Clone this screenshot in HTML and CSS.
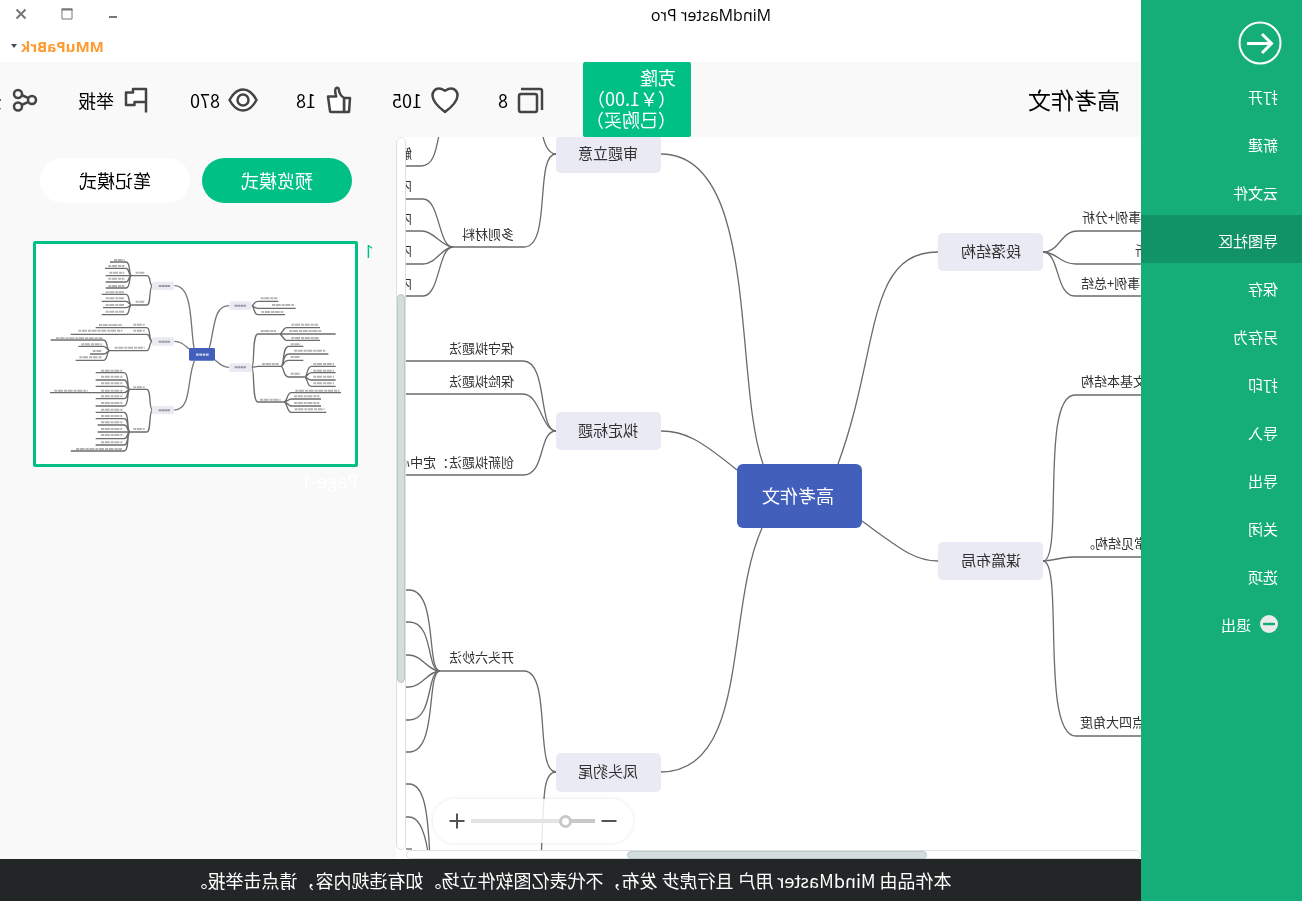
FILE: index.html
```html
<!DOCTYPE html>
<html lang="zh-CN">
<head>
<meta charset="utf-8">
<title>MindMaster Pro</title>
<link rel="stylesheet" href="styles.css">
</head>
<body>
<div class="app">
  <aside class="sidebar">
    <div class="sidebar-top">
      <button class="back" type="button" aria-label="返回">
        <svg width="44" height="44" viewBox="0 0 44 44" fill="none" stroke="#fff"><circle cx="22" cy="22" r="20.5" stroke-width="2"/><path d="M35 22.5H11" stroke-width="3"/><path d="M20 13l-9.500 9.500 9.500 9.500" stroke-width="3"/></svg>
      </button>
    </div>
    <nav class="menu">
      <a href="#">打开</a>
      <a href="#">新建</a>
      <a href="#">云文件</a>
      <a href="#" class="active">导图社区</a>
      <a href="#">保存</a>
      <a href="#">另存为</a>
      <a href="#">打印</a>
      <a href="#">导入</a>
      <a href="#">导出</a>
      <a href="#">关闭</a>
      <a href="#">选项</a>
      <a href="#"><svg width="18" height="18" viewBox="0 0 18 18"><circle cx="9" cy="9" r="9" fill="#ebebeb"/><path d="M4 9h10" stroke="#16ae78" stroke-width="2.400" stroke-linecap="round"/></svg>退出</a>
    </nav>
  </aside>

  <main class="main">
    <div class="titlebar">
      <div class="title-row">
        <h1>MindMaster Pro</h1>
        <div class="window-buttons">
          <button type="button" aria-label="最小化"><svg width="12" height="12" viewBox="0 0 12 12"><path d="M2 9h8" stroke="#777" stroke-width="2"/></svg></button>
          <button type="button" aria-label="最大化"><svg width="12" height="12" viewBox="0 0 12 12"><path d="M1 1h10v10H1z" fill="none" stroke="#777"/><path d="M.5 1.500h11" stroke="#777" stroke-width="2"/></svg></button>
          <button type="button" aria-label="关闭窗口"><svg width="12" height="12" viewBox="0 0 12 12"><path d="M1.500 1.500l9 9M10.500 1.500l-9 9" stroke="#777" stroke-width="2"/></svg></button>
        </div>
      </div>
      <div class="user-row">
        <button class="user" type="button">MMuPaBrk<svg width="6" height="4" viewBox="0 0 6 4"><path d="M0 0h6L3 4z" fill="#444a5c"/></svg></button>
      </div>
    </div>

    <header class="header">
      <h2>高考作文</h2>
      <button class="clone" type="button">克隆<br>（￥1.00）<br>（已购买）</button>
      <div class="stats">
        <button type="button"><svg width="30" height="30" viewBox="0 0 30 30"><rect x="9" y="9" width="18" height="18" rx="2"/><path d="M4 25V6q0-2 2-2h19"/></svg>8</button>
        <button type="button"><svg class="solid" width="30" height="30" viewBox="0 0 30 30"><path d="M15 27C11 24 3 17.500 2.500 11 2.300 6.500 5 3.500 9 3.500c2.500 0 4 1 6 2.200 2-1.200 3.500-2.200 6-2.200 4 0 6.700 3 6.500 7.500C27 17.500 19 24 15 27z"/></svg>105</button>
        <button type="button"><svg class="solid" width="30" height="30" viewBox="0 0 30 30"><path d="M4 13h6v14H5z"/><path d="M10 13c3-2 5-5 5.300-9 .2-2 3.200-1.500 3.500 1 .2 2.500-.3 4.500-1 6.500h8.200l-2 14.500q0 1-1.500 1H10z"/></svg>18</button>
        <button type="button"><svg class="solid" width="30" height="30" viewBox="0 0 30 30"><path d="M1.500 15C5 8.500 9.500 4.500 15 4.500s10 4 13.500 10.500C25 21.500 20.500 25.500 15 25.500S5 21.500 1.500 15z"/><circle cx="15" cy="15" r="5.500"/></svg>870</button>
        <button type="button"><svg class="solid" width="30" height="30" viewBox="0 0 30 30"><path stroke="none" d="M6 4h13v3.500h7V20h-8.500v-3H6z"/><path fill="none" d="M6 27.500V4h13v3.500h7V20h-8.500v-3H6"/></svg>举报</button>
        <button type="button"><svg width="30" height="30" viewBox="0 0 30 30"><circle cx="8" cy="15" r="4"/><circle cx="22" cy="9" r="4"/><circle cx="22" cy="21.500" r="4"/><path d="M11.500 13.200L18.500 10M11.500 16.800l7 3.200"/></svg>分享</button>
      </div>
    </header>

    <div class="content">
      <section class="canvas">
        <div class="stage">
          <svg class="map" width="100%" height="100%">
            <g transform="translate(-161 -137)">
              <g class="links">
                <path d="M539 464C569 380 542 154 641 154"/>
                <path d="M565 470C602 440 617 431 641 431"/>
                <path d="M540 528C577 610 552 772 641 772"/>
                <path d="M464 464C422 350 437 252 364 252"/>
                <path d="M440 521C403 548 388 561 364 561"/>
                <path d="M259 252C242 252 242 231 224 231H161"/>
                <path d="M259 252C245 252 242 264 226 264H161"/>
                <path d="M259 252C242 252 247 296 227 296H161"/>
                <path d="M259 561C238 561 262 395 227 395H161"/>
                <path d="M259 561C245 560 240 557 229 557H161"/>
                <path d="M259 561C238 561 262 736 226 736H161"/>
                <path d="M746 154C755 154 759 140 760 130"/>
                <path d="M746 154C768 154 750 247 778 247H849"/>
                <path d="M862 130C866 150 868 166 881 166H896"/>
                <path d="M849 247C864 247 862 199 879 199H896"/>
                <path d="M849 247C860 247 868 231 880 231H896"/>
                <path d="M849 247C860 247 866 264 879 264H896"/>
                <path d="M849 247C864 247 862 296 879 296H896"/>
                <path d="M746 431C764 431 754 361 779 361H896"/>
                <path d="M746 431C760 431 762 394 779 394H896"/>
                <path d="M746 431C764 431 756 475 779 475H896"/>
                <path d="M746 772C768 772 750 671 778 671H862"/>
                <path d="M746 772C760 772 758 800 761 860"/>
                <path d="M862 671C876 671 864 590 893 590h6"/>
                <path d="M862 671C876 671 868 622 893 622h6"/>
                <path d="M862 671C874 671 880 655 893 655h6"/>
                <path d="M862 671C874 671 880 687 893 687h6"/>
                <path d="M862 671C876 671 868 720 893 720h6"/>
                <path d="M862 671C876 671 864 752 893 752h6"/>
                <path d="M899 784h-6C878 784 874 810 872 860"/>
                <path d="M899 817h-6C882 817 876 835 873 860"/>
                <path d="M899 849h-9"/>
              </g>
              <g class="nodes">
                <rect x="641" y="135" width="105" height="38" rx="5"/>
                <rect x="641" y="412" width="105" height="38" rx="5"/>
                <rect x="641" y="753" width="105" height="39" rx="5"/>
                <rect x="259" y="233" width="105" height="38" rx="5"/>
                <rect x="259" y="542" width="105" height="38" rx="5"/>
                <text x="694" y="159">审题立意</text>
                <text x="694" y="436">拟定标题</text>
                <text x="694" y="777">凤头豹尾</text>
                <text x="311" y="257">段落结构</text>
                <text x="311" y="566">谋篇布局</text>
              </g>
              <g class="root">
                <rect x="440" y="464" width="125" height="64" rx="6"/>
                <text x="504" y="503">高考作文</text>
              </g>
              <g class="labels">
                <text x="788" y="239">多则材料</text>
                <text x="788" y="353">保守拟题法</text>
                <text x="788" y="386">保险拟题法</text>
                <text x="788" y="467">创新拟题法<tspan class="mid">：</tspan>定中心</text>
                <text x="788" y="662">开头六妙法</text>
                <text x="890" y="158">解</text>
                <text x="890" y="190">内</text>
                <text x="890" y="223">内</text>
                <text x="890" y="255">内</text>
                <text x="890" y="288">内</text>
              </g>
              <g class="labels end">
                <text x="220" y="222">事例+分析</text>
                <text x="167" y="255">析</text>
                <text x="221" y="288">事例+总结</text>
                <text x="221" y="386">文基本结构</text>
                <text x="220" y="548">常见结构<tspan class="mid">。</tspan></text>
                <text x="222" y="727">点四大角度</text>
              </g>
            </g>
          </svg>
          <div class="zoom">
            <button type="button" aria-label="缩小"><svg width="16" height="16" viewBox="0 0 16 16"><path d="M.5 8h15"/></svg></button>
            <input type="range" min="0" max="100" value="21" aria-label="缩放">
            <button type="button" aria-label="放大"><svg width="16" height="16" viewBox="0 0 16 16"><path d="M.5 8h15M8 .5v15"/></svg></button>
          </div>
        </div>
        <div class="hscroll"><div class="hthumb"></div></div>
      </section>
      <div class="vscroll"><div class="vthumb"></div></div>

      <aside class="panel">
        <div class="modes">
          <button class="mode selected" type="button">预览模式</button>
          <button class="mode" type="button">笔记模式</button>
        </div>
        <div class="page">
          <span class="page-number">1</span>
          <figure class="page-card">
            <svg class="thumb" viewBox="0 0 957 660">
              <g transform="translate(1005 -42) scale(-1 1)">
                <g class="thumb-main">
                  <path d="M522 354C510 290 520 167 463 167M507 357C490 342 480 334 463 334M523 392C500 450 515 540 463 540M568 354C585 290 580 227 628 227M585 390C600 403 610 412 628 412"/>
                </g>
                <g class="thumb-links">
                  <path d="M398 167C385 167 395 137 380 137H335M398 167C385 167 395 225 380 225H335M335 137C325 137 333 96 318 96H270M335 137C325 137 328 115 318 115H255M335 137H257M335 137C325 137 328 156 318 156H257M335 137C325 137 333 174 318 174H257"/>
                  <path d="M335 225C325 225 330 193 318 193H245M335 225C325 225 328 214 318 214H245M335 225C325 225 328 233 318 233H249M335 225C325 225 330 254 318 254H245"/>
                  <path d="M398 334C385 334 393 293 380 293H227M398 334C385 334 393 313 380 313H152M398 334C385 334 393 362 380 362H270M270 362C258 362 265 330 250 330H92M270 362C260 362 262 349 250 349H175M270 362C260 362 262 372 250 372H210M270 362C258 362 265 391 250 391H167"/>
                  <path d="M398 540C385 540 395 478 380 478H330M398 540C385 540 395 606 380 606H330M330 478C320 478 328 428 312 428H227M330 478C320 478 325 450 312 450H227M330 478C320 478 322 469 312 469H227M330 478C320 478 322 488 312 488H90M330 478C320 478 325 506 312 506H227M330 478C320 478 328 528 312 528H227"/>
                  <path d="M330 606C320 606 328 547 312 547H227M330 606C320 606 328 566 312 566H227M330 606C320 606 325 585 312 585H233M330 606H233M330 606C320 606 325 626 312 626H227M330 606C320 606 328 645 312 645H227M330 606C320 606 328 663 312 663H152"/>
                  <path d="M695 227C703 227 700 214 714 214H775M695 227C703 227 700 235 714 235H827M695 227C703 227 700 254 714 254H795"/>
                  <path d="M695 412C705 412 695 312 714 312H778M695 412L714 409H785M695 412C705 412 695 516 714 516H792"/>
                  <path d="M778 312C788 312 788 293 800 293H900M778 312H947M778 312C788 312 788 331 800 331H900"/>
                  <path d="M783 409C793 409 786 349 806 349H850M783 409C793 409 786 372 806 372H925M783 409C793 409 788 391 806 391H850M783 409C793 409 788 441 806 441H853"/>
                  <path d="M853 441C863 441 860 409 874 409H947M853 441C863 441 862 428 874 428H947M853 441C863 441 862 450 874 450H947M853 441C863 441 860 469 874 469H947"/>
                  <path d="M792 516C802 516 800 488 814 488H963M792 516C802 516 804 507 814 507H903M792 516C802 516 804 528 814 528H903M792 516C802 516 800 547 814 547H919"/>
                </g>
                <g class="thumb-text">
                  <path d="M282 90h32M265 108h48M268 128h45M265 146h48M265 168h48M257 187h55M257 205h55M257 225h55M257 245h55M347 128h28M347 215h28"/>
                  <path d="M237 285h70M340 284h34M175 302h132M340 302h34M284 353h90M108 325h140M184 343h62M218 363h28M178 382h68"/>
                  <path d="M243 422h64M243 440h64M243 460h64M103 482h100M243 482h64M243 499h64M243 519h64M340 472h34M243 539h64M243 558h64M243 577h64M243 597h64M243 615h64M243 637h64M168 657h138M340 597h34"/>
                  <path d="M722 205h50M756 225h66M724 246h66M814 284h80M808 303h98M814 324h82M722 303h46M812 343h30M822 362h94M812 381h30M726 402h50M812 431h30M720 509h62"/>
                  <path d="M880 402h62M880 422h62M880 440h62M880 460h62M826 482h132M822 499h76M822 519h76M824 538h90"/>
                </g>
                <g class="thumb-nodes">
                  <rect x="396" y="155" width="66" height="25" rx="5"/><rect x="396" y="322" width="66" height="25" rx="5"/><rect x="396" y="528" width="66" height="25" rx="5"/><rect x="628" y="214" width="66" height="26" rx="5"/><rect x="628" y="400" width="66" height="26" rx="5"/>
                  <path d="M416 168h34M416 335h34M416 541h34M644 227h34M644 412h34"/>
                </g>
                <rect x="507" y="354" width="78" height="38" rx="4" fill="#425fbb"/>
                <path d="M528 374h38" stroke="#c6cfec" stroke-width="7" stroke-dasharray="8 2"/>
              </g>
            </svg>
            <figcaption>Page-1</figcaption>
          </figure>
        </div>
      </aside>
    </div>

    <footer class="footer">本作品由 MindMaster 用户 且行虎步 发布，不代表亿图软件立场。如有违规内容，请点击举报。</footer>
  </main>
</div>
</body>
</html>
```

FILE: styles.css
```css
* { box-sizing: border-box; }

body {
  margin: 0;
  overflow: hidden;
  background: #fff;
  color: #000;
  font-family: "Open Sans", "Noto Sans CJK SC", sans-serif;
  font-size: 15px;
}

button {
  margin: 0;
  padding: 0;
  border: 0;
  background: none;
  color: inherit;
  font: inherit;
}

svg { flex: none; }

/* The whole window is shown flipped left to right. */
.app {
  display: flex;
  height: 100vh;
  transform: scaleX(-1);
}

/* Sidebar */
.sidebar {
  flex: 0 0 161px;
  background: #16ae78;
  color: #fff;
}
.sidebar-top {
  height: 71px;
  padding: 21px 20px 0;
}
.back svg { display: block; }
.menu { display: flex; flex-direction: column; }
.menu a {
  display: flex;
  align-items: center;
  gap: 9px;
  height: 48px;
  padding: 2px 24px 0;
  color: #fff;
  text-decoration: none;
  font-family: "Noto Sans CJK SC", sans-serif;
  font-size: 15px;
}
.menu .active { background: #129367; }

/* Main column */
.main {
  flex: 1;
  min-width: 0;
  display: flex;
  flex-direction: column;
}
.titlebar { height: 62px; }
.title-row { display: flex; height: 30px; align-items: center; }
.title-row h1 {
  flex: 1;
  margin: 0;
  text-align: center;
  font-size: 16px;
  font-weight: 400;
}
.window-buttons {
  width: 281px;
  display: flex;
  justify-content: flex-end;
  align-items: center;
  gap: 34px;
  padding: 0 15px 2px 0;
}
.window-buttons svg { display: block; }
.user-row {
  display: flex;
  justify-content: flex-end;
  align-items: center;
  height: 32px;
  padding-right: 11px;
}
.user {
  display: flex;
  align-items: center;
  gap: 4px;
  color: #ff9a2e;
  font-size: 15px;
  font-weight: 700;
}

/* Header */
.header {
  display: flex;
  align-items: center;
  height: 75px;
  overflow: hidden;
  background: #f9f9f9;
  font-family: "Noto Sans CJK SC", sans-serif;
  font-size: 18px;
}
.header h2 {
  flex: 0 0 450px;
  margin: 0;
  padding: 0 0 2px 21px;
  font-size: 23px;
  font-weight: 400;
}
.clone {
  flex: 0 0 108px;
  height: 75px;
  padding: 0 0 2px 15px;
  border-radius: 2px;
  background: #00c085;
  color: #fff;
  text-align: left;
  line-height: 21px;
  white-space: nowrap;
}
.stats {
  display: flex;
  gap: 38px;
  margin-left: 37px;
}
.stats button {
  display: flex;
  align-items: center;
  gap: 8px;
  white-space: nowrap;
  line-height: 28px;
}
.stats svg { fill: none; stroke: #444; stroke-width: 2.5px; stroke-linejoin: round; }
.stats .solid { fill: #fff; }

/* Canvas */
.content {
  flex: 1;
  min-height: 0;
  display: flex;
}
.canvas {
  flex: 1;
  min-width: 0;
  display: flex;
  flex-direction: column;
}
.stage {
  position: relative;
  flex: 1;
  min-height: 0;
  overflow: hidden;
}
.map {
  display: block;
  font-family: "Noto Sans CJK SC", sans-serif;
}
.links { fill: none; stroke: #6b6b6b; stroke-width: 1.3px; }
.nodes { font-size: 15px; text-anchor: middle; fill: #303030; }
.nodes rect { fill: #eaeaf4; }
.root { font-size: 18px; text-anchor: middle; fill: #fff; }
.root rect { fill: #425fbb; }
.labels { font-size: 13px; fill: #303030; }
.end { text-anchor: end; }
.mid { font-family: "Noto Sans CJK TC", sans-serif; }

.zoom {
  position: absolute;
  right: 27px;
  bottom: 7px;
  display: flex;
  align-items: center;
  gap: 6px;
  width: 200px;
  height: 44px;
  padding: 0 16px;
  border-radius: 22px;
  background: rgba(255, 255, 255, 0.85);
  box-shadow: 0 0 4px rgba(0, 0, 0, 0.1);
}
.zoom svg { display: block; stroke: #555; stroke-width: 2; }
.zoom input {
  flex: 1;
  min-width: 0;
  height: 14px;
  margin: 0;
  appearance: none;
  background: linear-gradient(to right, #c8c8c8 24%, #e4e4e4 24%) center / 100% 4px no-repeat;
}
.zoom input::-webkit-slider-thumb {
  appearance: none;
  width: 13px;
  height: 13px;
  border: 3px solid #c8c8c8;
  border-radius: 50%;
  background: #fff;
}

.hscroll {
  height: 9px;
  border: 1px solid #e0e0e0;
  border-radius: 5px;
  background: #fff;
}
.hthumb {
  width: 41%;
  height: 8px;
  margin-left: 29%;
  border: 1px solid #bccaca;
  border-radius: 4px;
  background: #d3dddd;
}
.vscroll {
  width: 10px;
  margin-bottom: 9px;
  padding-top: 156px;
  border: 1px solid #e0e0e0;
  border-radius: 5px;
  background: #fff;
}
.vthumb {
  height: 70%;
  border: 1px solid #bccaca;
  border-radius: 4px;
  background: #d3dddd;
}

/* Preview panel */
.panel {
  flex: 0 0 396px;
  padding-top: 21px;
  background: #f9f9f9;
}
.modes {
  display: flex;
  gap: 12px;
  padding-left: 44px;
}
.mode {
  width: 150px;
  height: 45px;
  padding-bottom: 2px;
  border-radius: 23px;
  background: #fff;
  font-family: "Noto Sans CJK SC", sans-serif;
  font-size: 18px;
}
.mode.selected { background: #00c085; color: #fff; }
.page {
  display: flex;
  padding: 38px 33px 0 22px;
}
.page-number {
  width: 16px;
  color: #00c085;
  font-size: 18px;
  line-height: 20px;
}
.page-card { flex: 1; margin: 0; }
.page-card figcaption {
  color: #fff;
  font-size: 18px;
  line-height: 28px;
}
.thumb {
  display: block;
  width: 100%;
  border: 3px solid #00c085;
  border-radius: 2px;
  background: #fff;
}
.thumb-main { fill: none; stroke: #777; stroke-width: 4; }
.thumb-links { fill: none; stroke: #6c6c6c; stroke-width: 4; }
.thumb-text { stroke: #b4b4b4; stroke-width: 6; stroke-dasharray: 9 2 15 3; }
.thumb-nodes { stroke: #9a9aa5; stroke-width: 6; stroke-dasharray: 8 1; }
.thumb-nodes rect { fill: #eaeaf4; stroke: none; }

/* Footer */
.footer {
  display: flex;
  align-items: center;
  justify-content: center;
  height: 42px;
  background: #222627;
  color: #fff;
  font-size: 18px;
  white-space: nowrap;
  font-family: "Noto Sans CJK SC", sans-serif;
}
```
